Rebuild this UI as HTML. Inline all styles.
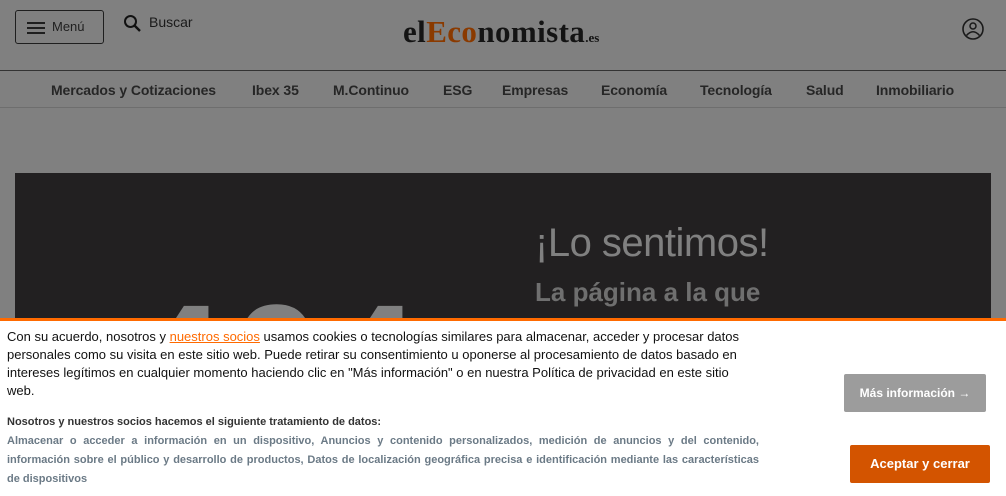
<!DOCTYPE html>
<html><head><meta charset="utf-8"><style>
*{margin:0;padding:0;box-sizing:border-box}
body{width:1006px;height:496px;overflow:hidden;background:#808080;font-family:"Liberation Sans",sans-serif;position:relative}
.abs{position:absolute}
.menu{left:15px;top:10px;width:89px;height:34px;border:1px solid #1f1f1f;border-radius:3px}
.menu span{position:absolute;left:36px;top:8px;font-size:13px;color:#1f1f1f}
.bars{position:absolute;left:11px;top:11px;width:18px;height:2px;background:#1f1f1f;box-shadow:0 5px 0 #1f1f1f,0 10px 0 #1f1f1f}
.logo{left:403px;top:14px;font-family:"Liberation Serif",serif;font-weight:bold;font-size:31px;color:#141414;letter-spacing:0.4px}
.logo b{color:#8a3a00}
.logo small{font-size:13px;letter-spacing:0}
nav{left:0;top:70px;width:1006px;height:38px;border-top:1px solid #333;border-bottom:1px solid #6e6e6e}
nav span{position:absolute;top:11px;font-size:14px;font-weight:bold;color:#262626;letter-spacing:-0.1px}
.box{left:15px;top:173px;width:976px;height:160px;background:#222021;overflow:hidden}
.n404{position:absolute;left:120px;top:96px;font-size:160px;font-weight:bold;color:#808080;letter-spacing:8px}
.h1{position:absolute;left:520px;top:48px;font-size:40px;color:#808080;letter-spacing:-0.5px}
.h2{position:absolute;left:520px;top:104px;font-size:26px;font-weight:bold;color:#6f6f6f}
.banner{left:0;top:318px;width:1006px;height:178px;background:#fff;border-top:3px solid #ff6a00}
.p1{position:absolute;left:7px;top:7px;width:740px;font-size:13px;line-height:18px;color:#111}
.p1 a{color:#ff6a00}
.p2{position:absolute;left:7px;top:95px;font-size:11px;font-weight:bold;color:#333}
.p3{position:absolute;left:7px;top:111px;width:752px;font-size:11px;font-weight:bold;color:#6b7a86;line-height:19px;text-align:justify}
.btn{position:absolute;border-radius:2px;color:#fff;font-size:13px;font-weight:bold;text-align:center}
</style></head><body>
<div class="abs menu"><div class="bars"></div><span>Menú</span></div>
<svg class="abs" style="left:123px;top:14px" width="20" height="20" viewBox="0 0 20 20"><circle cx="7.5" cy="7.5" r="5.5" fill="none" stroke="#111" stroke-width="2"/><path d="M11.5 11.5L17 17" stroke="#111" stroke-width="2.4"/></svg>
<div class="abs" style="left:149px;top:14px;font-size:14px;color:#1a1a1a">Buscar</div>
<div class="abs logo">el<b>Eco</b>nomista<small>.es</small></div>
<svg class="abs" style="left:962px;top:18px" width="22" height="22" viewBox="0 0 22 22"><circle cx="11" cy="11" r="10" fill="none" stroke="#1a1a1a" stroke-width="1.6"/><circle cx="11" cy="8" r="3" fill="none" stroke="#1a1a1a" stroke-width="1.5"/><path d="M4.5 17.5Q11 10 17.5 17.5" fill="none" stroke="#1a1a1a" stroke-width="1.5"/></svg>
<nav class="abs">
<span style="left:51px">Mercados y Cotizaciones</span><span style="left:252px">Ibex 35</span><span style="left:333px">M.Continuo</span><span style="left:443px">ESG</span><span style="left:502px">Empresas</span><span style="left:601px">Economía</span><span style="left:700px">Tecnología</span><span style="left:806px">Salud</span><span style="left:876px">Inmobiliario</span>
</nav>
<div class="abs box"><div class="n404">404</div><div class="h1">¡Lo sentimos!</div><div class="h2">La página a la que</div></div>
<div class="abs banner">
<div class="p1">Con su acuerdo, nosotros y <a href="#">nuestros socios</a> usamos cookies o tecnologías similares para almacenar, acceder y procesar datos personales como su visita en este sitio web. Puede retirar su consentimiento u oponerse al procesamiento de datos basado en intereses legítimos en cualquier momento haciendo clic en "Más información" o en nuestra Política de privacidad en este sitio web.</div>
<div class="p2">Nosotros y nuestros socios hacemos el siguiente tratamiento de datos:</div>
<div class="p3">Almacenar o acceder a información en un dispositivo, Anuncios y contenido personalizados, medición de anuncios y del contenido, información sobre el público y desarrollo de productos, Datos de localización geográfica precisa e identificación mediante las características de dispositivos</div>
<div class="btn" style="left:844px;top:53px;width:142px;height:38px;line-height:38px;background:#9c9c9c;font-size:12px">Más información →</div>
<div class="btn" style="left:850px;top:124px;width:140px;height:38px;line-height:38px;background:#d35400">Aceptar y cerrar</div>
</div>
</body></html>
